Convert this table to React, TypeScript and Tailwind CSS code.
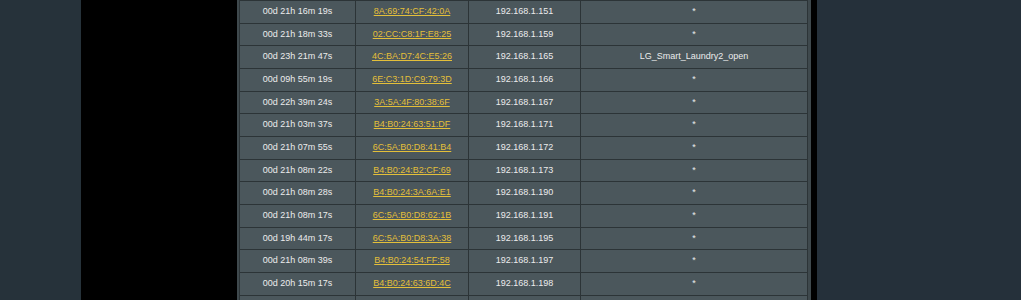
const clients = [
  { uptime: "00d 21h 16m 19s", mac: "8A:69:74:CF:42:0A", ip: "192.168.1.151", name: "*" },
  { uptime: "00d 21h 18m 33s", mac: "02:CC:C8:1F:E8:25", ip: "192.168.1.159", name: "*" },
  { uptime: "00d 23h 21m 47s", mac: "4C:BA:D7:4C:E5:26", ip: "192.168.1.165", name: "LG_Smart_Laundry2_open" },
  { uptime: "00d 09h 55m 19s", mac: "6E:C3:1D:C9:79:3D", ip: "192.168.1.166", name: "*" },
  { uptime: "00d 22h 39m 24s", mac: "3A:5A:4F:80:38:6F", ip: "192.168.1.167", name: "*" },
  { uptime: "00d 21h 03m 37s", mac: "B4:B0:24:63:51:DF", ip: "192.168.1.171", name: "*" },
  { uptime: "00d 21h 07m 55s", mac: "6C:5A:B0:D8:41:B4", ip: "192.168.1.172", name: "*" },
  { uptime: "00d 21h 08m 22s", mac: "B4:B0:24:B2:CF:69", ip: "192.168.1.173", name: "*" },
  { uptime: "00d 21h 08m 28s", mac: "B4:B0:24:3A:6A:E1", ip: "192.168.1.190", name: "*" },
  { uptime: "00d 21h 08m 17s", mac: "6C:5A:B0:D8:62:1B", ip: "192.168.1.191", name: "*" },
  { uptime: "00d 19h 44m 17s", mac: "6C:5A:B0:D8:3A:38", ip: "192.168.1.195", name: "*" },
  { uptime: "00d 21h 08m 39s", mac: "B4:B0:24:54:FF:58", ip: "192.168.1.197", name: "*" },
  { uptime: "00d 20h 15m 17s", mac: "B4:B0:24:63:6D:4C", ip: "192.168.1.198", name: "*" },
  { uptime: "", mac: "", ip: "", name: "" },
];

const cell = "flex items-center justify-center border-r border-[#2c3437] h-full";

const App = () => {
  return (
    <div className="flex h-[300px] w-full overflow-hidden bg-[#26323a] font-['Liberation_Sans',Arial,sans-serif] text-[9px] text-[#ececec]">
      <div className="w-[81px] shrink-0" />
      <div className="w-[156px] shrink-0 bg-black" />
      <div className="w-[574px] shrink-0 bg-[#3f494d] pl-[2px] pr-[3px]">
        <div className="border-l border-t border-[#2c3437] bg-[#4b575c]">
          {clients.map((c, i) => (
            <div
              key={i}
              className="grid h-[22.67px] grid-cols-[116px_113px_112px_227px] border-b border-[#2c3437]"
            >
              <div className={cell}>{c.uptime}</div>
              <div className={cell}>
                <a className="text-[#e3bf3a] underline underline-offset-[1px]">{c.mac}</a>
              </div>
              <div className={cell}>{c.ip}</div>
              <div className={cell}>{c.name}</div>
            </div>
          ))}
        </div>
      </div>
      <div className="w-[6px] shrink-0 bg-black" />
      <div className="flex-1 bg-[#25303a]" />
    </div>
  );
};

export default App;
